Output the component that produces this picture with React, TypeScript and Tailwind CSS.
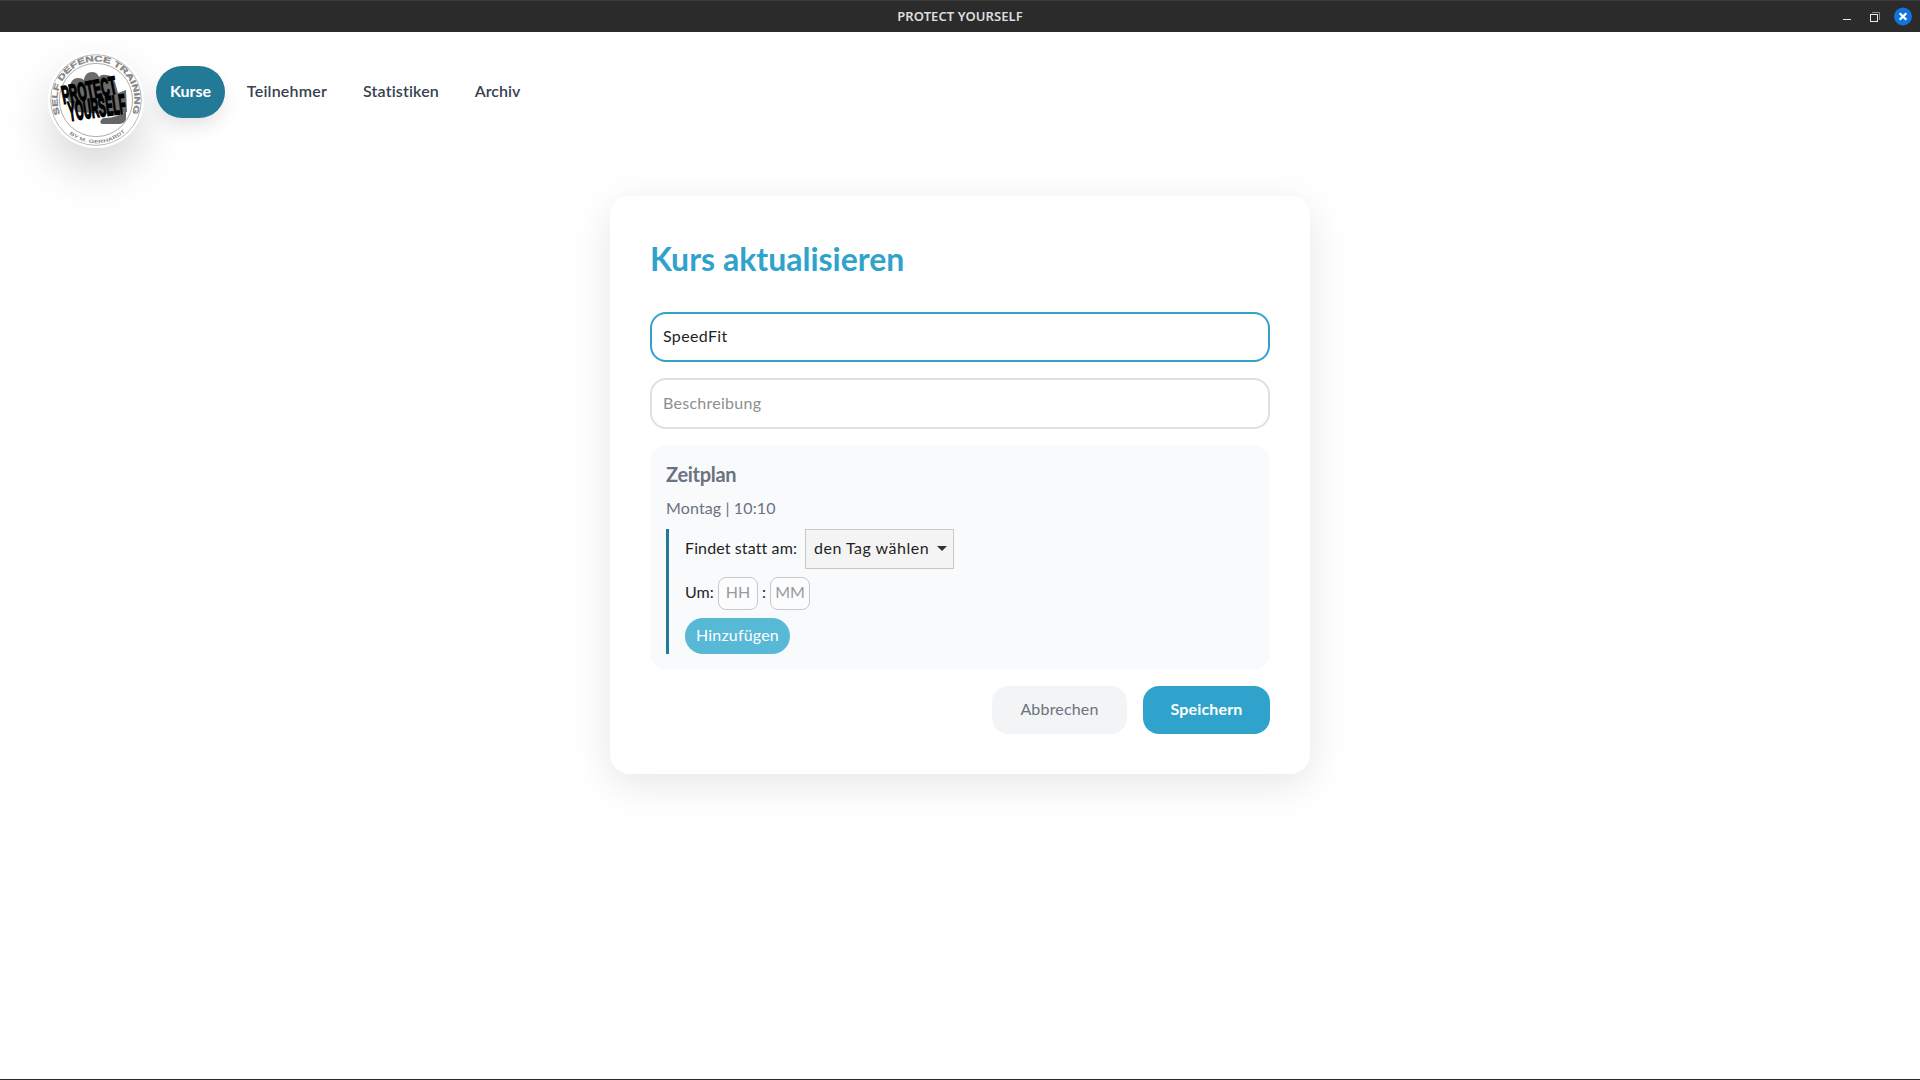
import React from "react";

const NAV = [
  { label: "Teilnehmer", box: "w-[108px]", track: "tracking-[0.22px]" },
  { label: "Statistiken", box: "w-[104px]", track: "tracking-[0.16px]" },
  { label: "Archiv", box: "w-[73px]", track: "tracking-normal" },
];

function Logo() {
  return (
    <svg viewBox="0 0 96 96" className="block h-24 w-24 overflow-visible">
      <defs>
        <path id="ringTop" d="M12.2 62 A38.5 38.5 0 1 1 83.8 62" />
        <path id="ringBottom" d="M17.5 78.5 A43 43 0 0 0 78.5 78.5" />
      </defs>
      <circle cx="48" cy="48" r="48" fill="#fff" />
      <circle cx="48" cy="48" r="45.3" fill="none" stroke="#8a8a8a" strokeWidth="0.6" />
      <circle cx="48" cy="48" r="36.6" fill="#fff" stroke="#777" strokeWidth="0.6" />
      <text fontFamily="Liberation Sans" fontSize="8" fontWeight="700" fill="#858585" stroke="#858585" strokeWidth="0.3">
        <textPath href="#ringTop" textLength="149" lengthAdjust="spacingAndGlyphs">SELF DEFENCE TRAINING</textPath>
      </text>
      <text fontFamily="Liberation Sans" fontSize="4.8" fontWeight="700" fill="#8a8a8a">
        <textPath href="#ringBottom" startOffset="5" textLength="61" lengthAdjust="spacingAndGlyphs">BY M. GERHARDT</textPath>
      </text>
      <path d="M22 33 Q24 26 30 26 Q34 26 36 28 Q37 20 44 20 Q49 20 51 25 Q53 22 58 23 Q65 23 67 30 L70 41 L78 38 L79 60 L60 62 L28 60 L19 46Z" fill="#6b6b6b" />
      <path d="M57 66 Q69 66 78 59 L78 67 Q77 72 70 72 L55 72 Q51 72 53 68 Q54 66 57 66Z" fill="#666" />
      <g fontFamily="Liberation Sans" fontWeight="700" fill="#000" stroke="#000" strokeWidth="1.2">
        <text transform="translate(15.5 52) rotate(-11) scale(0.68 1.3)" fontSize="19.5" textLength="81" lengthAdjust="spacingAndGlyphs">PROTECT</text>
        <text transform="translate(21.5 69) rotate(-8) scale(0.68 1.4)" fontSize="19.5" textLength="85" lengthAdjust="spacingAndGlyphs">YOURSELF</text>
      </g>
    </svg>
  );
}

function TitleBar() {
  return (
    <div className="grid h-8 w-full shrink-0 grid-cols-[1fr_auto_1fr] items-center border-t border-[#3c3c3c] bg-[#2b2b2b]">
      <div />
      <div className="pb-px font-['Noto_Sans'] text-[13px] leading-none font-semibold tracking-[0.08px] text-[#dedede]">PROTECT YOURSELF</div>
      <div className="flex items-center justify-end pr-2">
        <svg viewBox="0 0 70 20" className="h-5 w-[70px]">
          <path d="M1 12.5h8" stroke="#e8e8e8" strokeWidth="1" />
          <path d="M30 5.5h7.5v7.5" fill="none" stroke="#8a8a8a" strokeWidth="1" />
          <rect x="28.5" y="7.5" width="7" height="7" fill="none" stroke="#e8e8e8" strokeWidth="1" />
          <circle cx="61" cy="9.5" r="9" fill="#1173dc" />
          <path d="M57.7 6.2l6.6 6.6M64.3 6.2l-6.6 6.6" stroke="#fff" strokeWidth="2.2" />
        </svg>
      </div>
    </div>
  );
}

export default function App() {
  return (
    <div className="flex h-[1080px] w-[1920px] flex-col overflow-hidden border-b border-[#2b2b2b] bg-white font-['Lato',sans-serif] text-base text-[#1f1f1f]">
      <TitleBar />
      <header className="flex h-[164px] shrink-0 items-start pt-5 pl-12">
        <div className="h-24 w-24 rounded-full shadow-[0_22px_50px_-3px_rgba(0,0,0,0.18)]">
          <Logo />
        </div>
        <nav className="mt-3.5 ml-3 flex gap-2 font-semibold text-[#374151]">
          <a className="flex h-[52px] w-[69px] items-center justify-center rounded-full bg-[#237a97] pb-0.5 font-bold text-white shadow-[0_10px_20px_-3px_rgba(0,0,0,0.12)]">Kurse</a>
          {NAV.map((n) => (
            <a key={n.label} className={`flex h-[52px] items-center justify-center pb-0.5 ${n.box} ${n.track}`}>
              {n.label}
            </a>
          ))}
        </nav>
      </header>

      <main className="mx-auto flex h-[578px] w-[700px] flex-col rounded-[20px] bg-white p-10 shadow-[0_10px_40px_rgba(0,0,0,0.1)]">
        <h1 className="h-[76px] pt-px text-[32px] leading-[44px] font-bold text-[#2fa3cb]">Kurs aktualisieren</h1>
        <input
          defaultValue="SpeedFit"
          className="h-[50.4px] w-full shrink-0 rounded-2xl border-2 border-[#2fa3cb] px-[11px] pb-[3px] tracking-[0.35px] outline-none"
        />
        <input
          placeholder="Beschreibung"
          className="mt-4 h-[50.4px] w-full shrink-0 rounded-2xl border-2 border-[#e0e0e0] px-[11px] pb-0.5 tracking-[0.27px] outline-none placeholder:text-[#8e8e8e]"
        />
        <section className="mt-4 h-[225.2px] shrink-0 rounded-2xl bg-[#f8fafc] p-4">
          <h2 className="h-7 text-[20px] leading-[26px] font-bold tracking-[-0.3px] text-[#6b7280]">Zeitplan</h2>
          <p className="mt-[7px] h-[33px] leading-6 tracking-[0.13px] text-[#6b7280]">Montag | 10:10</p>
          <div className="flex h-[125px] flex-col items-start gap-2 border-l-3 border-[#237a97] pl-4">
            <div className="flex h-10 items-center">
              <span className="w-[120px] pb-px tracking-[0.12px]">Findet statt am:</span>
              <button className="flex h-10 w-[149px] items-center justify-between border border-[#c8c8c8] bg-[#f4f4f4] pr-1.5 pl-2">
                <span className="pb-px tracking-[0.5px]">den Tag wählen</span>
                <svg viewBox="0 0 10 5" className="h-[5px] w-2.5">
                  <path d="M0 0h10L5 5z" fill="#2e3436" />
                </svg>
              </button>
            </div>
            <div className="flex h-[33px] items-center">
              <span className="w-[33px] pb-0.5">Um:</span>
              <input placeholder="HH" className="h-[33px] w-10 rounded-lg border border-[#c8c8c8] bg-white/40 pb-[3px] text-center placeholder:text-[#9a9a9a]" />
              <span className="w-3 pb-0.5 text-center">:</span>
              <input placeholder="MM" className="h-[33px] w-10 rounded-lg border border-[#c8c8c8] bg-white/40 pb-[3px] text-center placeholder:text-[#9a9a9a]" />
            </div>
            <button className="h-9 w-[105px] rounded-full bg-[#57b9d6] pb-0.5 tracking-[0.18px] text-white">Hinzufügen</button>
          </div>
        </section>
        <div className="mt-4 flex justify-end gap-4">
          <button className="h-12 w-[135px] rounded-2xl bg-[#f3f4f6] pb-0.5 tracking-[0.18px] text-[#6b7280]">Abbrechen</button>
          <button className="h-12 w-[127px] rounded-2xl bg-[#2fa3cb] pb-0.5 font-bold tracking-[0.15px] text-white">Speichern</button>
        </div>
      </main>
    </div>
  );
}
